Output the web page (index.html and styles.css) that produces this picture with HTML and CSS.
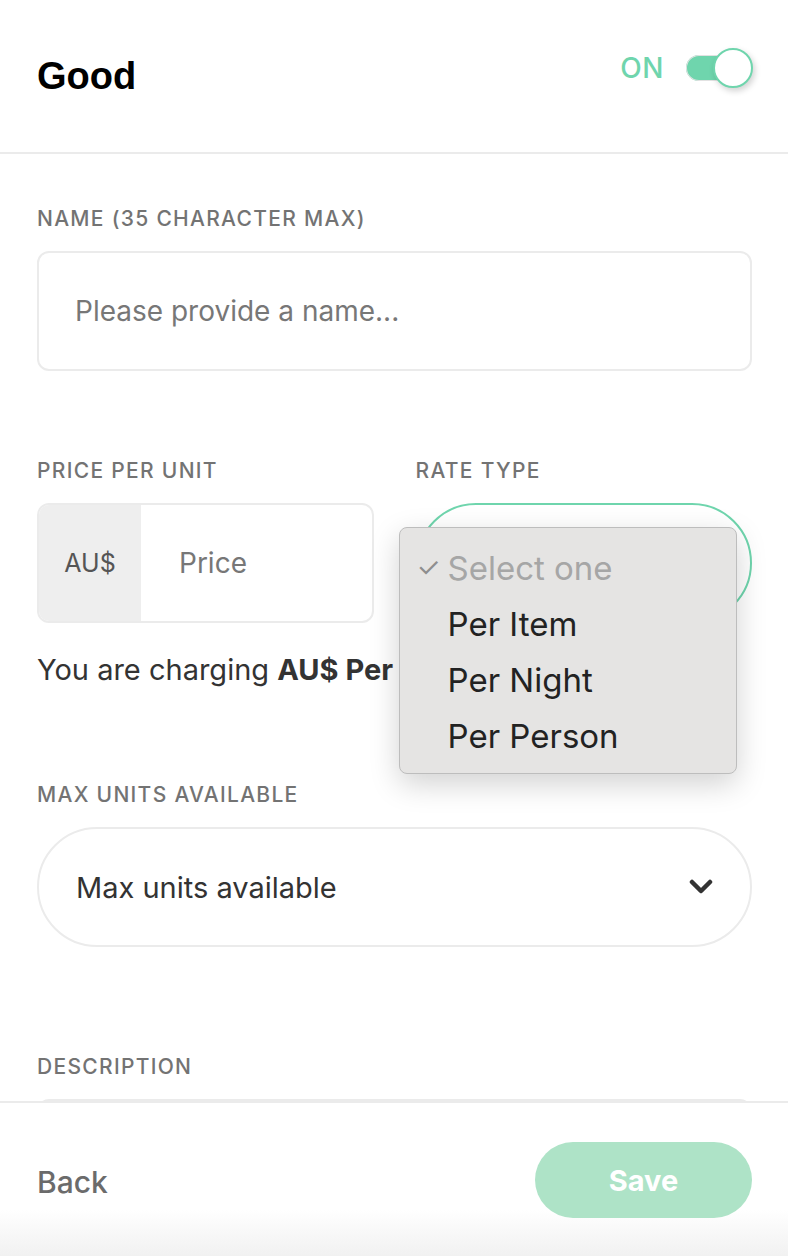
FILE: index.html
```html
<!DOCTYPE html>
<html lang="en">
<head>
    <meta charset="UTF-8">
    <meta name="viewport" content="width=device-width, initial-scale=1.0">
    <title>Add-on</title>
    <link rel="stylesheet" href="styles.css">
</head>
<body>
    <div class="page">
        <header class="top-bar">
            <h1 class="title">Good</h1>
            <div class="status">
                <span class="status-text">ON</span>
                <div class="toggle">
                    <div class="toggle-knob"></div>
                </div>
            </div>
        </header>

        <main class="form">
            <div class="field field-name">
                <label class="field-label">NAME (35 CHARACTER MAX)</label>
                <input class="text-input" type="text" placeholder="Please provide a name...">
            </div>

            <div class="field-row">
                <div class="field field-price">
                    <label class="field-label">PRICE PER UNIT</label>
                    <div class="price-group">
                        <span class="price-prefix">AU$</span>
                        <input class="price-input" type="text" placeholder="Price">
                    </div>
                </div>
                <div class="field field-rate">
                    <label class="field-label">RATE TYPE</label>
                    <div class="pill-select pill-select-active"></div>
                    <ul class="dropdown">
                        <li class="dropdown-item dropdown-item-selected"><span class="check">✓</span>Select one</li>
                        <li class="dropdown-item">Per Item</li>
                        <li class="dropdown-item">Per Night</li>
                        <li class="dropdown-item">Per Person</li>
                    </ul>
                </div>
            </div>

            <p class="charge-note">You are charging <strong>AU$ Per unit</strong></p>

            <div class="field field-units">
                <label class="field-label">MAX UNITS AVAILABLE</label>
                <div class="pill-select">
                    <span class="pill-value">Max units available</span>
                    <svg class="chevron" width="24" height="16" viewBox="0 0 24 16">
                        <polyline points="3,3 12,12 21,3" fill="none" stroke="#333" stroke-width="4.5" stroke-linecap="round" stroke-linejoin="round"/>
                    </svg>
                </div>
            </div>

            <div class="field field-description">
                <label class="field-label">DESCRIPTION</label>
                <div class="text-area"></div>
            </div>
        </main>

        <footer class="bottom-bar">
            <a class="back-link">Back</a>
            <button class="save-button">Save</button>
        </footer>
    </div>
</body>
</html>
```

FILE: styles.css
```css
* {
    margin: 0;
    padding: 0;
    box-sizing: border-box;
}

body {
    background: #fff;
    font-family: Inter, "Liberation Sans", sans-serif;
    color: #333;
}

.page {
    width: 788px;
    height: 1256px;
    display: flex;
    flex-direction: column;
    overflow: hidden;
}

/* header */
.top-bar {
    height: 154px;
    flex-shrink: 0;
    display: flex;
    justify-content: space-between;
    align-items: center;
    padding: 0 36px 0 37px;
    border-bottom: 2px solid #ebebeb;
}

.title {
    font-family: "Liberation Sans", Arial, sans-serif;
    font-size: 38px;
    font-weight: bold;
    color: #000;
}

.status {
    display: flex;
    align-items: center;
    gap: 22px;
    margin-bottom: 16px;
}

.status-text {
    font-size: 28px;
    font-weight: 500;
    letter-spacing: 0.5px;
    color: #6fd5ad;
}

.toggle {
    position: relative;
    width: 66px;
    height: 26px;
    border-radius: 13px;
    background: #6fd5ad;
    box-shadow: inset 0 0 0 1px #e2e2e2;
}

.toggle-knob {
    position: absolute;
    right: -1px;
    top: -7px;
    width: 40px;
    height: 40px;
    border-radius: 50%;
    background: #fff;
    border: 2px solid #6fd5ad;
    box-shadow: 2px 3px 6px rgba(0, 0, 0, 0.18);
}

/* form */
.form {
    flex: 1;
    overflow: hidden;
    padding: 53px 36px 0 37px;
}

.field-label {
    display: block;
    font-size: 21px;
    line-height: 24px;
    font-weight: 500;
    letter-spacing: 1.3px;
    white-space: nowrap;
    color: #737373;
    margin-bottom: 20px;
}

.text-input,
.price-input {
    font-family: inherit;
    font-size: 28px;
    color: #333;
    border: none;
    outline: none;
    background: transparent;
}

.text-input::placeholder,
.price-input::placeholder {
    color: #777;
}

.text-input {
    display: block;
    width: 100%;
    height: 120px;
    padding: 0 36px;
    border: 2px solid #ebebeb;
    border-radius: 12px;
}

.field-row {
    display: grid;
    grid-template-columns: 1fr 1fr;
    gap: 42px;
    margin-top: 88px;
}

.field-row .field {
    min-width: 0;
}

.field-rate {
    position: relative;
}

.price-group {
    display: flex;
    height: 120px;
    border: 2px solid #ebebeb;
    border-radius: 12px;
    overflow: hidden;
}

.price-prefix {
    width: 102px;
    flex-shrink: 0;
    display: flex;
    align-items: center;
    justify-content: center;
    background: #eeeeee;
    font-size: 25px;
    color: #555;
}

.price-input {
    flex: 1;
    width: 0;
    padding-left: 38px;
}

.pill-select {
    height: 120px;
    border: 2px solid #ebebeb;
    border-radius: 60px;
    display: flex;
    align-items: center;
    justify-content: space-between;
    padding: 0 37px 0 37px;
}

.pill-select-active {
    border-color: #6fd5ad;
}

.pill-value {
    font-size: 29px;
    color: #333;
}

/* open native-style menu */
.dropdown {
    position: absolute;
    left: -17px;
    top: 68px;
    width: 338px;
    list-style: none;
    padding: 12px 0 9px;
    background: #e5e4e3;
    border: 1px solid #bdbdbd;
    border-radius: 8px;
    box-shadow: 0 10px 30px rgba(0, 0, 0, 0.18);
    z-index: 2;
}

.dropdown-item {
    position: relative;
    height: 56px;
    line-height: 56px;
    padding-left: 48px;
    font-size: 33px;
    color: #222;
}

.dropdown-item-selected {
    color: #a6a6a6;
}

.check {
    position: absolute;
    left: 17px;
    font-size: 27px;
    color: #8e8e8e;
}

.charge-note {
    margin-top: 29px;
    font-size: 29px;
    line-height: 36px;
    white-space: nowrap;
    color: #333;
}

.charge-note strong {
    font-weight: 700;
}

.field-units {
    margin-top: 95px;
}

.chevron {
    display: block;
}

.field-description {
    margin-top: 108px;
}

.text-area {
    height: 160px;
    border: 2px solid #ebebeb;
    border-radius: 12px;
}

/* footer */
.bottom-bar {
    height: 155px;
    flex-shrink: 0;
    display: flex;
    justify-content: space-between;
    align-items: flex-start;
    padding: 39px 36px 0 37px;
    border-top: 2px solid #ebebeb;
    background: linear-gradient(180deg, #fff 0%, #fff 70%, #f1f1f1 100%);
}

.back-link {
    margin-top: 22px;
    font-size: 30px;
    font-weight: 500;
    color: #6b6b6b;
}

.save-button {
    width: 217px;
    height: 76px;
    border: none;
    border-radius: 38px;
    background: #aee3c7;
    color: #fff;
    font-family: inherit;
    font-size: 29px;
    font-weight: 700;
}
```
